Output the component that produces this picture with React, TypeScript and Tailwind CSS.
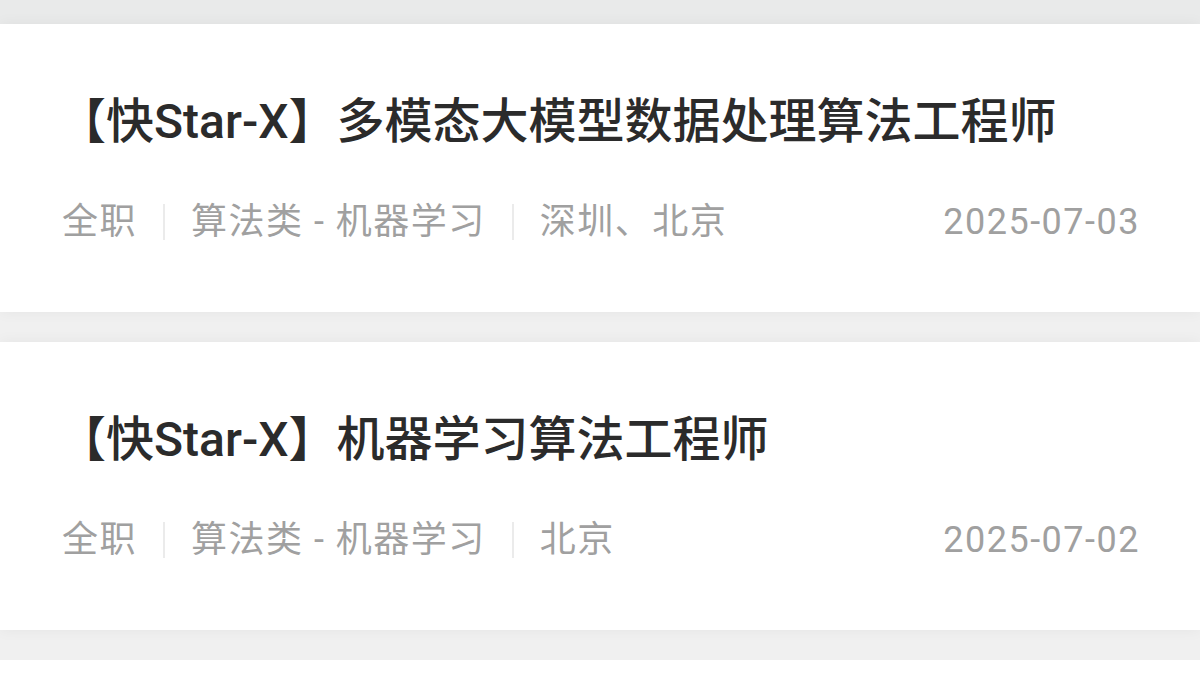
const jobs = [
  {
    title: "【快Star-X】多模态大模型数据处理算法工程师",
    type: "全职",
    category: "算法类 - 机器学习",
    city: "深圳、北京",
    date: "2025-07-03",
  },
  {
    title: "【快Star-X】机器学习算法工程师",
    type: "全职",
    category: "算法类 - 机器学习",
    city: "北京",
    date: "2025-07-02",
  },
];

function Divider() {
  return <span className="ml-[26px] mr-[26px] h-[36px] w-[2px] bg-[#ebebeb]" />;
}

export default function App() {
  return (
    <main
      className="min-h-screen bg-[#f0f0f0]"
      style={{ fontFamily: 'Roboto, "Noto Sans CJK SC", sans-serif' }}
    >
      <div className="h-[24px] bg-[#e9eaea]" />
      <div className="flex flex-col gap-[30px]">
        {jobs.map((job) => (
          <div
            key={job.title}
            className="bg-white px-[62px] pt-[62px] h-[288px] shadow-[0_0_14px_rgba(0,0,0,0.05)]"
          >
            <h2 className="text-[48px] leading-[72px] font-medium text-[#2b2b2b] whitespace-nowrap -ml-[4px]">
              {job.title}
            </h2>
            <div className="mt-[37px] flex items-center justify-between text-[36px] leading-[54px] tracking-[1.5px] text-[#a0a0a0]">
              <div className="flex items-center">
                <span>{job.type}</span>
                <Divider />
                <span>{job.category}</span>
                <Divider />
                <span>{job.city}</span>
              </div>
              <span className="-mr-[2px]">{job.date}</span>
            </div>
          </div>
        ))}
        <div className="h-[40px] bg-white" />
      </div>
    </main>
  );
}
